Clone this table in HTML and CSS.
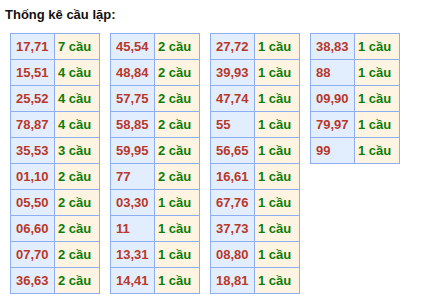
FILE: index.html
```html
<!DOCTYPE html>
<html lang="vi">
<head>
<meta charset="utf-8">
<link rel="stylesheet" href="styles.css">
</head>
<body>
<div class="title">Thống kê cầu lặp:</div>
<div class="tables">
  <table class="stat">
    <tr><td class="pair">17,71</td><td class="count">7 cầu</td></tr>
    <tr><td class="pair">15,51</td><td class="count">4 cầu</td></tr>
    <tr><td class="pair">25,52</td><td class="count">4 cầu</td></tr>
    <tr><td class="pair">78,87</td><td class="count">4 cầu</td></tr>
    <tr><td class="pair">35,53</td><td class="count">3 cầu</td></tr>
    <tr><td class="pair">01,10</td><td class="count">2 cầu</td></tr>
    <tr><td class="pair">05,50</td><td class="count">2 cầu</td></tr>
    <tr><td class="pair">06,60</td><td class="count">2 cầu</td></tr>
    <tr><td class="pair">07,70</td><td class="count">2 cầu</td></tr>
    <tr><td class="pair">36,63</td><td class="count">2 cầu</td></tr>
  </table>
  <table class="stat">
    <tr><td class="pair">45,54</td><td class="count">2 cầu</td></tr>
    <tr><td class="pair">48,84</td><td class="count">2 cầu</td></tr>
    <tr><td class="pair">57,75</td><td class="count">2 cầu</td></tr>
    <tr><td class="pair">58,85</td><td class="count">2 cầu</td></tr>
    <tr><td class="pair">59,95</td><td class="count">2 cầu</td></tr>
    <tr><td class="pair">77</td><td class="count">2 cầu</td></tr>
    <tr><td class="pair">03,30</td><td class="count">1 cầu</td></tr>
    <tr><td class="pair">11</td><td class="count">1 cầu</td></tr>
    <tr><td class="pair">13,31</td><td class="count">1 cầu</td></tr>
    <tr><td class="pair">14,41</td><td class="count">1 cầu</td></tr>
  </table>
  <table class="stat">
    <tr><td class="pair">27,72</td><td class="count">1 cầu</td></tr>
    <tr><td class="pair">39,93</td><td class="count">1 cầu</td></tr>
    <tr><td class="pair">47,74</td><td class="count">1 cầu</td></tr>
    <tr><td class="pair">55</td><td class="count">1 cầu</td></tr>
    <tr><td class="pair">56,65</td><td class="count">1 cầu</td></tr>
    <tr><td class="pair">16,61</td><td class="count">1 cầu</td></tr>
    <tr><td class="pair">67,76</td><td class="count">1 cầu</td></tr>
    <tr><td class="pair">37,73</td><td class="count">1 cầu</td></tr>
    <tr><td class="pair">08,80</td><td class="count">1 cầu</td></tr>
    <tr><td class="pair">18,81</td><td class="count">1 cầu</td></tr>
  </table>
  <table class="stat">
    <tr><td class="pair">38,83</td><td class="count">1 cầu</td></tr>
    <tr><td class="pair">88</td><td class="count">1 cầu</td></tr>
    <tr><td class="pair">09,90</td><td class="count">1 cầu</td></tr>
    <tr><td class="pair">79,97</td><td class="count">1 cầu</td></tr>
    <tr><td class="pair">99</td><td class="count">1 cầu</td></tr>
  </table>
</div>
</body>
</html>
```
FILE: styles.css
```css
html, body {
  margin: 0;
  padding: 0;
  background: #ffffff;
}
body {
  font-family: "Liberation Sans", Arial, sans-serif;
  font-size: 13px;
}
.title {
  font-weight: bold;
  color: #111111;
  line-height: 15px;
  padding: 7px 0 0 5px;
  height: 26px;
  box-sizing: border-box;
}
.tables {
  display: flex;
  align-items: flex-start;
  gap: 10px;
  padding: 0 0 0 10px;
  margin-top: 7px;
}
.stat {
  border-collapse: collapse;
  table-layout: fixed;
  width: 89px;
  font-weight: bold;
}
.stat td {
  border: 1px solid #8eaef0;
  height: 26px;
  padding: 0;
  box-sizing: border-box;
  vertical-align: middle;
  white-space: nowrap;
  overflow: hidden;
}
.stat td.pair {
  width: 44px;
  background: #e2eefd;
  color: #b8382a;
  padding-left: 5px;
}
.stat td.count {
  width: 45px;
  background: #fff3e1;
  color: #0a7d0a;
  padding-left: 3px;
}
```
